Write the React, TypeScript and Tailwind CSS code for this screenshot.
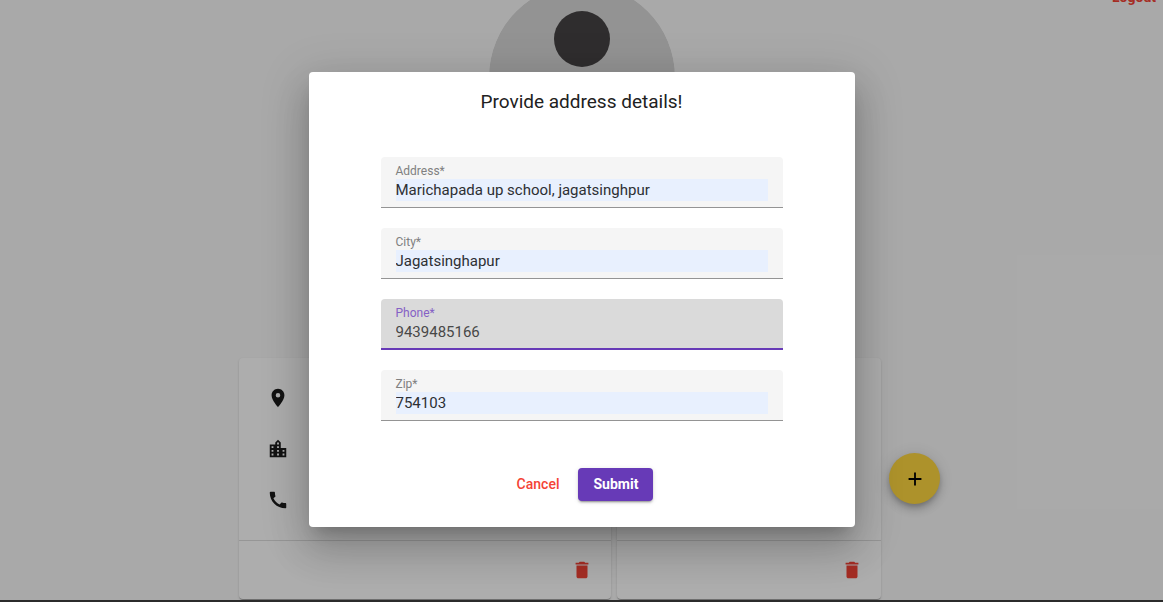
import { MdAdd, MdCall, MdDelete, MdLocationCity, MdLocationOn } from 'react-icons/md';

type FieldProps = {
  id: string;
  label: string;
  value: string;
  active?: boolean;
};

function Field({ id, label, value, active = false }: FieldProps) {
  return (
    <div
      className={
        active
          ? 'flex h-[51px] flex-col gap-px rounded-t border-b-2 border-[#673ab7] bg-[#dadada] px-[15px] pt-[7px]'
          : 'flex h-[51px] flex-col gap-px rounded-t border-b border-[#949494] bg-[#f5f5f5] px-[15px] pt-[7px]'
      }
    >
      <label
        htmlFor={id}
        className={active ? 'text-[12px] leading-[14px] text-[#8561c5]' : 'text-[12px] leading-[14px] text-[#808080]'}
      >
        {label}*
      </label>
      <input
        id={id}
        defaultValue={value}
        required
        className={
          active
            ? 'h-[22px] w-full bg-transparent text-[15px] text-[#484848] outline-none'
            : 'h-[22px] w-full bg-[#e8f0fe] text-[15px] text-[#2d2f33] outline-none'
        }
      />
    </div>
  );
}

function CardFooter() {
  return (
    <div className="flex h-[59px] items-center justify-end border-t border-[#dedede] px-[18px]">
      <button type="button" aria-label="Delete address" className="text-[#f44336]">
        <MdDelete size={22} />
      </button>
    </div>
  );
}

const cardClass =
  'flex h-[241px] flex-col rounded bg-white shadow-[0_2px_1px_-1px_rgba(0,0,0,0.2),0_1px_1px_rgba(0,0,0,0.14),0_1px_3px_rgba(0,0,0,0.12)]';

function Avatar() {
  return (
    <svg viewBox="0 0 186 186" className="size-[186px]" aria-hidden="true">
      <clipPath id="avatar-clip">
        <circle cx="93" cy="93" r="93" />
      </clipPath>
      <g clipPath="url(#avatar-clip)">
        <circle cx="93" cy="93" r="93" fill="#d9d9d9" />
        <circle cx="93" cy="55" r="28" fill="#464344" />
        <ellipse cx="93" cy="150" rx="55" ry="50" fill="#464344" />
      </g>
    </svg>
  );
}

export default function App() {
  return (
    <div className="flex h-screen flex-col bg-[#fafafa] font-['Roboto',sans-serif]">
      <div className="relative min-h-0 flex-1 overflow-hidden">
        <main className="-mt-4">
          <header className="grid grid-cols-[1fr_auto_1fr] items-start">
            <span />
            <Avatar />
            <a href="#logout" className="justify-self-end pt-[3px] pr-[7px] text-[14px] leading-5 font-bold text-[#f44336]">
              Logout
            </a>
          </header>
          <section className="mt-[188px] ml-4 flex items-center justify-center">
            <article className={`${cardClass} w-[372px]`}>
              <div className="flex flex-1 flex-col gap-[29px] px-7 pt-[29px] text-[#1c1c1c]">
                <MdLocationOn size={22} />
                <MdLocationCity size={22} />
                <MdCall size={22} />
              </div>
              <CardFooter />
            </article>
            <article className={`${cardClass} ml-1.5 w-[264px]`}>
              <div className="flex-1" />
              <CardFooter />
            </article>
            <button
              type="button"
              aria-label="Add address"
              className="ml-2 flex size-[51px] items-center justify-center rounded-full bg-[#ffd740] text-black shadow-[0_3px_5px_-1px_rgba(0,0,0,0.2),0_6px_10px_rgba(0,0,0,0.14),0_1px_18px_rgba(0,0,0,0.12)]"
            >
              <MdAdd size={22} />
            </button>
          </section>
        </main>

        <div className="absolute inset-0 flex items-center justify-center bg-black/32 pb-px">
          <div
            role="dialog"
            aria-labelledby="dialog-title"
            className="w-[546px] rounded bg-white px-[72px] pt-[17px] pb-[26px] shadow-[0_11px_15px_-7px_rgba(0,0,0,0.2),0_24px_38px_3px_rgba(0,0,0,0.14),0_9px_46px_8px_rgba(0,0,0,0.12)]"
          >
            <h2 id="dialog-title" className="text-center text-[19px] leading-[26px] font-normal text-[#212121]">
              Provide address details!
            </h2>
            <form className="mt-[42px]">
              <div className="flex flex-col gap-5">
                <Field id="address" label="Address" value="Marichapada up school, jagatsinghpur" />
                <Field id="city" label="City" value="Jagatsinghapur" />
                <Field id="phone" label="Phone" value="9439485166" active />
                <Field id="zip" label="Zip" value="754103" />
              </div>
              <div className="mt-[47px] flex h-[33px] items-center justify-center gap-3">
                <button type="button" className="h-full px-[7px] text-[14px] font-medium text-[#f44336]">
                  Cancel
                </button>
                <button
                  type="button"
                  className="h-full rounded bg-[#673ab7] px-[15px] text-[14px] font-bold text-white shadow-[0_3px_1px_-2px_rgba(0,0,0,0.2),0_2px_2px_rgba(0,0,0,0.14),0_1px_5px_rgba(0,0,0,0.12)]"
                >
                  Submit
                </button>
              </div>
            </form>
          </div>
        </div>
      </div>
      <div className="h-0.5 bg-[#2b2b2b]" />
    </div>
  );
}
